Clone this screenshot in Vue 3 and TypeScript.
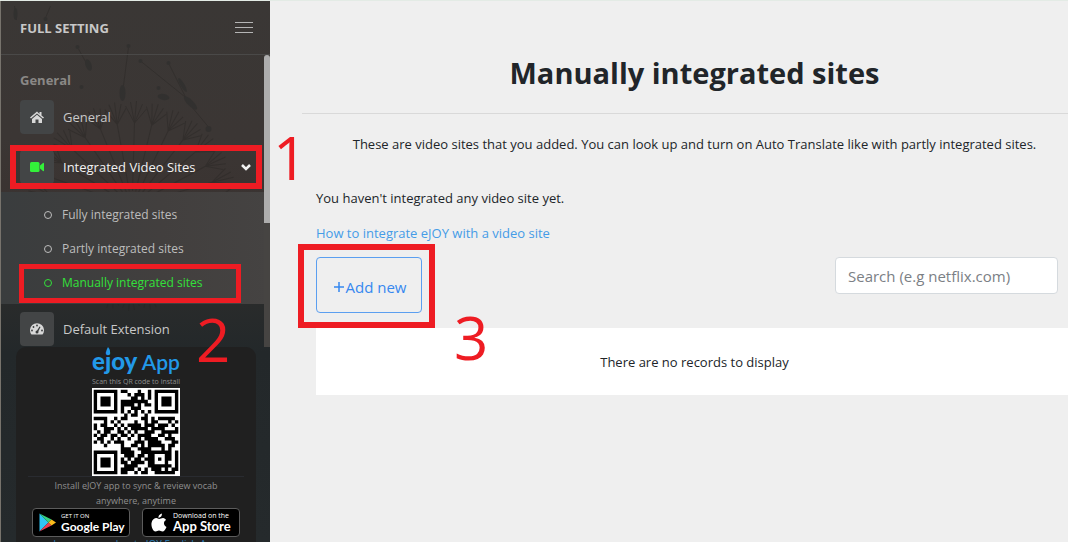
<script setup lang="ts">
import { ref } from 'vue'

interface SubItem {
  label: string
  active?: boolean
}

const search = ref('')

const subItems: SubItem[] = [
  { label: 'Fully integrated sites' },
  { label: 'Partly integrated sites' },
  { label: 'Manually integrated sites', active: true },
]

const qrRows: string[] = [
  '1111111011000100101111111',
  '1000001000101110101000001',
  '1011101000011010101011101',
  '1011101011111111001011101',
  '1011101011110101101011101',
  '1000001010011100001000001',
  '1111111010101010101111111',
  '0000000001011001000000000',
  '1111001011000011010111110',
  '0001010100001001011000101',
  '1011001010111101110111010',
  '1001110101011111011110001',
  '0101100110101001110011111',
  '1011011011010111100110100',
  '0110010100100101111001110',
  '1010101110001110111100011',
  '0001000010011010111110110',
  '0000000011100111100010100',
  '1111111011110011111111101',
  '1000001001110110110001101',
  '1011101010101101110101101',
  '1011101011011110110001001',
  '1011101001111000111111101',
  '1000001011110101011101011',
  '1111111011001011001111110',
]

const qrPath: string = qrRows
  .map((row, y) =>
    [...row].map((cell, x) => (cell === '1' ? `M${x} ${y}h1v1h-1z` : '')).join(''),
  )
  .join('')

const rays: number[] = Array.from({ length: 30 }, (_, i) => i * 12)
</script>

<template>
  <div class="page">
    <aside class="sidebar">
      <svg class="backdrop" viewBox="0 0 270 542" preserveAspectRatio="xMidYMin slice" aria-hidden="true">
        <g fill="none" stroke="#242220" stroke-width="1">
          <path d="M128 46L122 92M140 60l52 42M168 62l20 40 20 24M78 48l10 18M45 17L50 5M14 5l2 14" />
          <g v-for="a in rays" :key="a" :transform="`rotate(${a} 132 205)`">
            <path d="M132 190L134 122M134 122l-9-17M134 122l-4-21M134 122l2-22M134 122l8-19M134 122l12-14" />
          </g>
        </g>
        <g fill="#232626">
          <ellipse cx="88" cy="64" rx="3" ry="6" transform="rotate(-20 88 64)" />
          <ellipse cx="122" cy="92" rx="3" ry="8" />
          <ellipse cx="163" cy="96" rx="6" ry="3" transform="rotate(10 163 96)" />
          <ellipse cx="190" cy="102" rx="3" ry="9" transform="rotate(-45 190 102)" />
          <ellipse cx="182" cy="84" rx="2" ry="8" transform="rotate(-30 182 84)" />
          <ellipse cx="15" cy="13" rx="2" ry="6" />
          <circle cx="77" cy="46" r="2" /><circle cx="128" cy="45" r="2" />
          <circle cx="140" cy="60" r="2" /><circle cx="168" cy="62" r="2" />
          <circle cx="45" cy="18" r="2" /><circle cx="158" cy="87" r="2" />
          <circle cx="208" cy="128" r="3" /><circle cx="81" cy="86" r="2" />
        </g>
      </svg>

      <header class="side-head">
        <strong>FULL SETTING</strong>
        <button class="burger" type="button" aria-label="Toggle menu"><i></i><i></i><i></i></button>
      </header>

      <nav class="nav">
        <h2 class="group">General</h2>
        <a class="item" href="#general">
          <span class="tile">
            <svg width="14" height="12" viewBox="0 0 28 24" fill="currentColor">
              <path d="M14 1L0 13l2 2L14 5l12 10 2-2-5-4V2h-4v4z" />
              <path d="M14 7.500L4 16v8h7v-7h6v7h7v-8z" />
            </svg>
          </span>
          General
        </a>
        <a class="item current" href="#video-sites">
          <span class="tile green">
            <svg width="14" height="10" viewBox="0 0 28 20" fill="currentColor">
              <rect width="19" height="20" rx="3" />
              <path d="M20 7l6-5q2-1 2 1v14q0 2-2 1l-6-5z" />
            </svg>
          </span>
          Integrated Video Sites
          <svg class="chevron" width="10" height="8" viewBox="0 0 10 8" fill="none" stroke="currentColor" stroke-width="2.500">
            <path d="M1 2l4 4 4-4" />
          </svg>
        </a>
        <ul class="sub">
          <li v-for="s in subItems" :key="s.label">
            <a href="#sites" :class="{ active: s.active }"><i class="dot"></i>{{ s.label }}</a>
          </li>
        </ul>
        <a class="item" href="#extension">
          <span class="tile">
            <svg width="14" height="12" viewBox="0 0 28 24">
              <path d="M3 23a14 14 0 1 1 22 0z" fill="currentColor" />
              <g fill="#3b3d3e">
                <circle cx="14" cy="5" r="1.800" /><circle cx="7" cy="8" r="1.800" />
                <circle cx="4" cy="15" r="1.800" /><circle cx="24" cy="15" r="1.800" />
                <circle cx="14" cy="18" r="3" /><path d="M13 17l6-10 2 1-5 10z" />
              </g>
            </svg>
          </span>
          Default Extension
        </a>
        <span class="thumb"></span>
      </nav>

      <section class="promo">
        <h3 class="brand">
          <span>ejoy</span> App
          <svg class="flame" width="4" height="8" viewBox="0 0 4 8" fill="currentColor" aria-hidden="true">
            <path d="M2 0q4 5 1 8H1Q-1 5 2 0z" />
          </svg>
        </h3>
        <p class="scan">Scan this QR code to install</p>
        <svg class="qr" viewBox="-0.500 -0.500 26 26" role="img" aria-label="QR code" shape-rendering="geometricPrecision">
          <rect x="-0.500" y="-0.500" width="26" height="26" fill="#fff" />
          <path :d="qrPath" fill="#000" />
        </svg>
        <p class="sync">Install eJOY app to sync &amp; review vocab anywhere, anytime</p>
        <div class="stores">
          <a class="store" href="#google-play">
            <svg width="17" height="19" viewBox="0 0 34 38" aria-hidden="true">
              <path d="M1 1v36l18-18z" fill="#2fc4f4" />
              <path d="M1 1l18 18 6-6z" fill="#35d07f" />
              <path d="M1 37l18-18 6 6z" fill="#ec3b50" />
              <path d="M25 13l9 6-9 6-6-6z" fill="#fbbc1c" />
            </svg>
            <span class="store-text google"><small>GET IT ON</small><b>Google Play</b></span>
          </a>
          <a class="store apple" href="#app-store">
            <svg width="16" height="19" viewBox="0 0 32 38" fill="#fff" aria-hidden="true">
              <path d="M22 1q0 7-7 9-1-7 7-9z" />
              <path d="M16 12c3 0 5-2 8-2s5 2 6 4c-6 3-5 11 1 14-2 5-5 9-8 9s-4-2-7-2-4 2-7 2C4 37 0 27 1 20S7 10 11 10c2 0 4 2 5 2z" />
            </svg>
            <span class="store-text"><small>Download on the</small><b>App Store</b></span>
          </a>
        </div>
        <a class="learn" href="#learn">Learn more about eJOY English App</a>
      </section>
    </aside>

    <main class="main">
      <div class="content">
        <h1>Manually integrated sites</h1>
        <div class="body">
          <p class="intro">These are video sites that you added. You can look up and turn on Auto Translate like with partly integrated sites.</p>
          <p class="empty">You haven't integrated any video site yet.</p>
          <a class="help" href="#help">How to integrate eJOY with a video site</a>
          <div class="tools">
            <button class="add" type="button">
              <svg width="10" height="10" viewBox="0 0 10 10" stroke="currentColor" stroke-width="1.500" aria-hidden="true"><path d="M5 0v10M0 5h10" /></svg>
              Add new
            </button>
            <input v-model="search" class="search" type="search" aria-label="Search sites" placeholder="Search (e.g netflix.com)" />
          </div>
          <div class="records">There are no records to display</div>
        </div>
      </div>
    </main>

    <div class="mark box-one"></div>
    <div class="mark box-two"></div>
    <div class="mark box-three"></div>
    <span class="num num-one">1</span>
    <span class="num num-two">2</span>
    <span class="num num-three">3</span>
  </div>
</template>

<style>
body {
  margin: 0;
  background: #efefef;
}
</style>

<style scoped>
* {
  box-sizing: border-box;
}
.page {
  position: relative;
  display: flex;
  height: 100vh;
  overflow: hidden;
  border-top: 1px solid #e3ebe5;
  background: #efefef;
  color: #212529;
  font: 13px/20px "Open Sans", "Noto Sans", sans-serif;
}
a {
  color: inherit;
  text-decoration: none;
}
p, h1, h2, h3, ul {
  margin: 0;
  padding: 0;
}
.sidebar {
  position: relative;
  flex: 0 0 270px;
  height: 100vh;
  overflow: hidden;
  border-left: 1px solid #77736c;
  background: linear-gradient(#3a3735, #3b3634 25%, #3a3331 38%, #292b2b 56%, #23282a 65%, #252a2c);
  color: #c8c8c8;
}
.backdrop {
  position: absolute;
  inset: 0;
  width: 100%;
  height: 100%;
  opacity: 0.35;
}
.side-head {
  position: relative;
  display: flex;
  align-items: center;
  justify-content: space-between;
  height: 54px;
  padding: 0 17px 0 19px;
  border-bottom: 1px solid #4a4948;
  font-size: 13px;
}
.burger {
  display: grid;
  gap: 4px;
  width: 18px;
  padding: 0;
  border: 0;
  background: none;
}
.burger i {
  height: 1px;
  background: #b5b5b5;
}
.nav {
  position: relative;
  height: calc(100vh - 250px);
  overflow: hidden;
}
.group {
  padding: 15px 19px 2px;
  color: #8a8886;
  font-size: 13px;
  line-height: 20px;
}
.item {
  display: flex;
  align-items: center;
  gap: 9px;
  height: 50px;
  padding: 0 19px;
}
.current {
  color: #f2f2f2;
}
.tile {
  display: grid;
  place-items: center;
  width: 34px;
  height: 34px;
  border-radius: 4px;
  background: #434546;
  color: #d8d8d8;
}
.green {
  color: #33f03a;
}
.chevron {
  margin-left: auto;
}
.sub {
  padding: 6px 0 4px;
  background: linear-gradient(90deg, #3a3d3e, #423f3e 60%, #454342);
  list-style: none;
  font-size: 12px;
}
.sub a {
  display: flex;
  align-items: center;
  gap: 10px;
  height: 34px;
  padding-left: 43px;
  color: #bdbdbd;
}
.sub .active {
  color: #33e03a;
}
.dot {
  width: 8px;
  height: 8px;
  border: 1px solid currentColor;
  border-radius: 50%;
}
.thumb {
  position: absolute;
  top: 0;
  right: 0;
  width: 6px;
  height: 100%;
  background: linear-gradient(#adadad 168px, #464442 168px);
  border-radius: 3px 3px 0 0;
}
.promo {
  position: relative;
  display: flex;
  flex-direction: column;
  align-items: center;
  margin: 0 14px 0 15px;
  border-radius: 10px 10px 0 0;
  background: #202020;
  color: #8f8f8f;
  text-align: center;
}
.brand {
  position: relative;
  color: #2299e8;
  font: 600 21px/28px Lato, "Open Sans", sans-serif;
}
.brand span {
  font-weight: 900;
  font-size: 24px;
}
.flame {
  position: absolute;
  top: 0;
  left: 14px;
}
.scan {
  font-size: 7px;
  line-height: 12px;
}
.qr {
  width: 88px;
  height: 88px;
}
.sync {
  width: 216px;
  padding: 1px 20px 0;
  border-top: 1px solid #292b30;
  font-size: 9px;
  line-height: 15px;
}
.stores {
  display: flex;
  gap: 12px;
}
.store {
  display: flex;
  align-items: center;
  gap: 5px;
  width: 98px;
  height: 29px;
  padding-left: 6px;
  border: 1px solid #5c5c5c;
  border-radius: 4px;
  background: #000;
  color: #fff;
}
.store.apple {
  gap: 6px;
  padding-left: 8px;
}
.store-text {
  display: grid;
  text-align: left;
  white-space: nowrap;
}
.store-text small {
  font-size: 6px;
  line-height: 8px;
}
.store-text b {
  font: 700 12px/13px Lato, sans-serif;
}
.apple .store-text b {
  font-size: 13px;
}
.apple .store-text small {
  font-size: 7px;
}
.learn {
  color: #2b7fb8;
  font-size: 10px;
  line-height: 15px;
}
.main {
  flex: 1;
  min-width: 0;
  overflow: hidden;
}
.content {
  margin: 0 -19px 0 32px;
}
h1 {
  padding: 47px 0 16px;
  border-bottom: 1px solid #d9d9d9;
  font-size: 29px;
  line-height: 49px;
  text-align: center;
}
.body {
  padding: 20px 14px;
}
.intro {
  text-align: center;
}
.empty {
  margin-top: 34px;
}
.help {
  display: block;
  margin-top: 15px;
  color: #459ce7;
}
.tools {
  display: flex;
  align-items: flex-start;
  justify-content: space-between;
  margin: 14px 15px 15px 0;
}
.add {
  display: flex;
  align-items: center;
  justify-content: center;
  gap: 2px;
  width: 106px;
  height: 56px;
  padding: 3px 0 0 2px;
  border: 1px solid #5b9ff0;
  border-radius: 4px;
  background: none;
  color: #3688ef;
  font: inherit;
  font-size: 15px;
}
.search {
  width: 223px;
  height: 37px;
  padding: 0 12px;
  border: 1px solid #d5dade;
  border-radius: 4px;
  background: #fff;
  color: #495057;
  font: inherit;
  font-size: 15px;
}
.search::placeholder {
  color: #7b8085;
}
.records {
  padding: 24px 0 23px;
  background: #fff;
  text-align: center;
}
.mark {
  position: absolute;
  border: 6px solid #ee1c23;
  pointer-events: none;
}
.box-one {
  left: 10px;
  top: 144px;
  width: 252px;
  height: 44px;
}
.box-two {
  left: 19px;
  top: 263px;
  width: 222px;
  height: 39px;
  border-width: 5px;
}
.box-three {
  left: 298px;
  top: 243px;
  width: 137px;
  height: 84px;
}
.num {
  position: absolute;
  color: #ee1c23;
  font-size: 60px;
  line-height: 60px;
}
.num-one {
  left: 273px;
  top: 126px;
}
.num-two {
  left: 196px;
  top: 308px;
}
.num-three {
  left: 454px;
  top: 306px;
}
</style>
